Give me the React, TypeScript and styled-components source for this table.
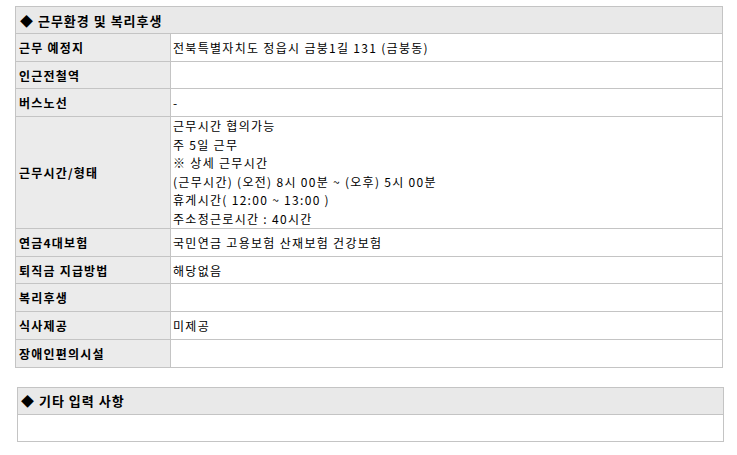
import styled, { createGlobalStyle } from "styled-components";

const GlobalStyle = createGlobalStyle`
  body {
    margin: 0;
    background: #ffffff;
    font-family: "Noto Sans CJK KR", "Noto Sans", sans-serif;
    font-size: 12px;
    color: #000000;
  }
`;

const Page = styled.div`
  display: flex;
  flex-direction: column;
  padding: 6px 15px 0 15px;
  width: 737px;
  box-sizing: border-box;
`;

const InfoTable = styled.table`
  width: 708px;
  border-collapse: collapse;
  table-layout: fixed;
  border: 1px solid #c4c4c4;
`;

const LabelCol = styled.col`
  width: 155px;
`;

const HeadCell = styled.th`
  height: 26px;
  padding: 0 4px;
  background: #e9e9e9;
  border: 1px solid #c4c4c4;
  text-align: left;
  font-size: 13px;
  font-weight: bold;
  letter-spacing: 1px;
`;

const Label = styled.th`
  height: 26.7px;
  padding: 0 3px;
  background: #ebebeb;
  border: 1px solid #c4c4c4;
  text-align: left;
  font-weight: bold;
  letter-spacing: 1.2px;
`;

const Value = styled.td<{ $multi?: boolean }>`
  height: 26.7px;
  padding: 0 2px;
  border: 1px solid #c4c4c4;
  line-height: ${({ $multi }) => ($multi ? "18.5px" : "normal")};
  letter-spacing: 1.3px;
  vertical-align: middle;
`;

const Box = styled.div`
  margin: 19px 0 0 2px;
  width: 707px;
  border: 1px solid #c4c4c4;
  box-sizing: border-box;
  display: flex;
  flex-direction: column;
`;

const BoxHead = styled.div`
  height: 26px;
  display: flex;
  align-items: center;
  padding: 0 3px;
  background: #e9e9e9;
  border-bottom: 1px solid #c4c4c4;
  font-size: 13px;
  font-weight: bold;
  letter-spacing: 1px;
`;

const BoxBody = styled.div`
  height: 26px;
`;

const rows: [string, string[]][] = [
  ["근무 예정지", ["전북특별자치도 정읍시 금붕1길 131 (금붕동)"]],
  ["인근전철역", []],
  ["버스노선", ["-"]],
  [
    "근무시간/형태",
    [
      "근무시간 협의가능",
      "주 5일 근무",
      "※ 상세 근무시간",
      "(근무시간) (오전) 8시 00분 ~ (오후) 5시 00분",
      "휴게시간( 12:00 ~ 13:00 )",
      "주소정근로시간 : 40시간",
    ],
  ],
  ["연금4대보험", ["국민연금 고용보험 산재보험 건강보험"]],
  ["퇴직금 지급방법", ["해당없음"]],
  ["복리후생", []],
  ["식사제공", ["미제공"]],
  ["장애인편의시설", []],
];

export default function App() {
  return (
    <>
      <GlobalStyle />
      <Page>
        <InfoTable>
          <colgroup>
            <LabelCol />
            <col />
          </colgroup>
          <thead>
            <tr>
              <HeadCell colSpan={2}>◆ 근무환경 및 복리후생</HeadCell>
            </tr>
          </thead>
          <tbody>
            {rows.map(([label, lines]) => (
              <tr key={label}>
                <Label>{label}</Label>
                <Value $multi={lines.length > 1}>
                  {lines.map((line, i) => (
                    <div key={i}>{line}</div>
                  ))}
                </Value>
              </tr>
            ))}
          </tbody>
        </InfoTable>
        <Box>
          <BoxHead>◆ 기타 입력 사항</BoxHead>
          <BoxBody />
        </Box>
      </Page>
    </>
  );
}
